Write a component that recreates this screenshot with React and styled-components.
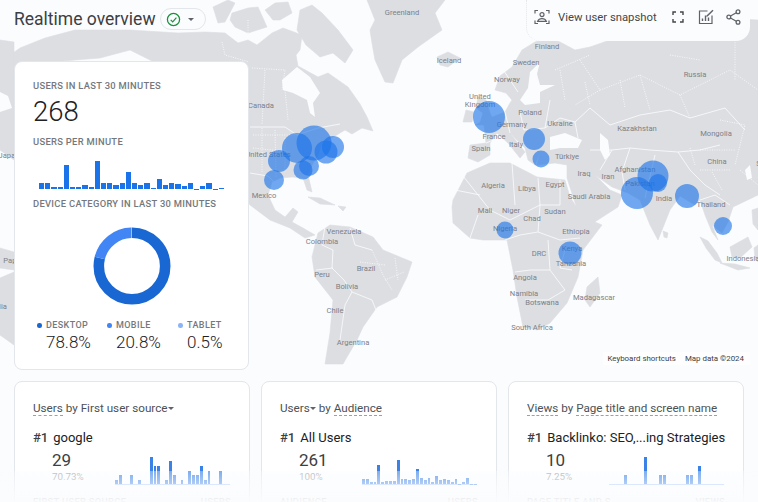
import React from 'react';
import styled, { createGlobalStyle } from 'styled-components';

const GlobalStyle = createGlobalStyle`
  html, body { margin: 0; padding: 0; background: #fbfcfe; }
  body { font-family: Roboto, "Liberation Sans", sans-serif; color: #202124; }
`;

const Page = styled.div`
  position: relative;
  width: 758px;
  height: 502px;
  overflow: hidden;
  background: #fbfcfe;
`;

const MapLayer = styled.svg`
  position: absolute;
  left: 0;
  top: 0;
`;

const Content = styled.div`
  position: relative;
  display: flex;
  flex-direction: column;
`;

const Header = styled.header`
  display: flex;
  justify-content: space-between;
  align-items: flex-start;
  height: 41px;
  margin-bottom: 20px;
  padding: 0 8px 0 14px;
`;

const TitleGroup = styled.div`
  display: flex;
  align-items: center;
  gap: 4px;
  height: 38px;
`;

const Title = styled.h1`
  margin: 0;
  font-size: 17.5px;
  font-weight: 400;
  color: #3c4043;
  white-space: nowrap;
`;

const StatusChip = styled.button`
  display: flex;
  align-items: center;
  gap: 7px;
  width: 46px;
  height: 22px;
  padding: 0 0 0 5px;
  border: 1px solid #e3e6ea;
  border-radius: 11px;
  background: #fbfcfe;
`;

const Caret = styled.span`
  flex: none;
  width: 0;
  height: 0;
  border-left: 3px solid transparent;
  border-right: 3px solid transparent;
  border-top: 3px solid ${props => props.$color || '#5f6368'};
`;

const Toolbar = styled.div`
  display: flex;
  align-items: center;
  width: 224px;
  height: 41px;
  box-sizing: border-box;
  padding: 0 7px 7px;
  background: #fbfcfe;
  border-radius: 0 0 14px 14px;
  border-left: 1px dotted #e4e6ea;
  color: #5f6368;
`;

const ToolLabel = styled.span`
  margin: 0 14px 0 8px;
  font-size: 11.3px;
  color: #444746;
  white-space: nowrap;
`;

const ToolIcon = styled.svg`
  flex: none;
  margin-right: ${props => props.$gap || 0}px;
`;

const MainRow = styled.div`
  display: flex;
  justify-content: space-between;
  align-items: flex-end;
  padding: 0 8px 0 14px;
`;

const SummaryCard = styled.section`
  box-sizing: border-box;
  width: 235px;
  height: 309px;
  padding: 18px 18px 0;
  background: #fff;
  border: 1px solid #e3e6ea;
  border-radius: 8px;
`;

const Overline = styled.div`
  font-size: 9.4px;
  font-weight: 500;
  letter-spacing: 0.3px;
  line-height: 12px;
  color: #74787d;
  white-space: nowrap;
`;

const BigNumber = styled.div`
  margin: 1px 0 5px;
  font-size: 27.5px;
  font-weight: 300;
  line-height: 38px;
  color: #202124;
`;

const MinuteChart = styled.div`
  display: flex;
  align-items: flex-end;
  gap: 1px;
  width: 185px;
  height: 30px;
  margin: 11px 0 9px 6px;
`;

const MinuteBar = styled.div`
  flex: 1;
  height: ${props => props.$h}px;
  background: #1a73e8;
`;

const DonutWrap = styled.div`
  display: flex;
  justify-content: center;
  margin: 17px 0 0;
`;

const Legend = styled.div`
  display: grid;
  grid-template-columns: 70px 71px 60px;
  margin: 14px 0 0 5px;
`;

const LegendItem = styled.div`
  display: flex;
  flex-direction: column;
  padding-left: 2px;
`;

const LegendLabel = styled.div`
  position: relative;
  padding-left: 6px;
  font-size: 9px;
  font-weight: 500;
  letter-spacing: 0.4px;
  line-height: 12px;
  color: #74787d;

  &::before {
    content: '';
    position: absolute;
    left: -3px;
    top: 4px;
    width: 4.5px;
    height: 4.5px;
    border-radius: 50%;
    background: ${props => props.$color};
  }
`;

const LegendValue = styled.div`
  padding-left: 6px;
  font-size: 17px;
  font-weight: 300;
  line-height: 23px;
  color: #202124;
`;

const Attribution = styled.div`
  display: flex;
  gap: 9px;
  margin-bottom: 5px;
  padding: 1px 6px 1px 4px;
  font-size: 7.9px;
  line-height: 11px;
  color: #3c4043;
  background: rgba(255, 255, 255, 0.7);
`;

const CardRow = styled.div`
  display: grid;
  grid-template-columns: 236px 236px 236px;
  gap: 11px;
  padding: 11px 0 0 14px;
`;

const ReportCard = styled.section`
  box-sizing: border-box;
  height: 140px;
  padding: 18px 18px 0;
  background: #fff;
  border: 1px solid #e3e6ea;
  border-radius: 8px;
`;

const CardTitle = styled.div`
  display: flex;
  align-items: center;
  font-size: 11.7px;
  line-height: 16px;
  color: #4d5156;
  white-space: nowrap;
`;

const Dimension = styled.span`
  border-bottom: 1px dashed #9aa0a6;
  line-height: 14px;
`;

const Spaced = styled.span`
  white-space: pre;
`;

const RankRow = styled.div`
  display: flex;
  gap: 5px;
  margin-top: 13px;
  font-size: 13px;
  font-weight: 500;
  line-height: 18px;
  color: #3c4043;
`;

const RankName = styled.span`
  font-weight: 400;
  color: #202124;
  white-space: nowrap;
`;

const MetricRow = styled.div`
  display: flex;
  justify-content: space-between;
  align-items: flex-start;
  height: 37px;
  margin-top: 1px;
`;

const MetricText = styled.div`
  padding-left: 19px;
`;

const MetricValue = styled.div`
  font-size: 17px;
  line-height: 24px;
  color: #3c4043;
`;

const MetricShare = styled.div`
  margin-top: -1px;
  font-size: 9.8px;
  line-height: 12px;
  color: #9aa0a6;
`;

const Spark = styled.div`
  align-self: flex-end;
  display: flex;
  align-items: flex-end;
  gap: 1px;
  width: 115px;
  height: 30px;
  margin-right: 1px;
  border-bottom: 1px solid #a8c7fa;
`;

const SparkBar = styled.div`
  flex: 1;
  height: ${props => props.$h}px;
  background: #3b82e6;
`;

const TableHead = styled.div`
  display: flex;
  justify-content: space-between;
  margin-top: 11px;
  font-size: 9.4px;
  font-weight: 500;
  letter-spacing: 0.3px;
  color: #74787d;
`;

const BottomFade = styled.div`
  position: absolute;
  left: 0;
  right: 0;
  bottom: 0;
  height: 31px;
  background: linear-gradient(rgba(249, 251, 253, 0.35), rgba(251, 252, 254, 0.97));
`;

const land = [
  // North America
  '0,62 20,48 45,38 75,30 100,30 130,30 178,33 205,32 225,33 238,43 248,40 257,45 272,33 283,28 302,35 300,50 296,55 298,66 318,77 328,73 348,87 360,104 367,117 373,131 362,128 352,134 345,130 335,136 322,143 318,155 312,165 308,175 312,192 307,190 303,178 292,177 280,178 272,182 268,195 275,210 285,217 293,208 298,212 292,222 303,228 315,235 305,238 290,228 270,220 250,205 235,185 235,150 215,110 170,70 130,50 100,58 50,62 0,75',
  // Arctic islands, Greenland and Iceland
  '213,7 228,0 235,3 225,22 218,23',
  '232,13 248,8 258,7 267,27 248,33 235,27 230,20',
  '265,10 275,3 288,2 292,13 280,20 273,20',
  '300,10 312,5 322,13 338,30 353,50 345,63 333,53 320,57 306,45 297,30',
  '367,0 445,0 435,13 442,30 418,47 402,60 393,83 385,82 375,60 372,43 370,30 375,20',
  '437,57 448,52 460,58 448,67 440,65',
  // Caribbean
  '308,197 320,198 335,205 320,204',
  '338,206 346,207 343,211',
  // South America
  '318,233 330,225 350,227 373,237 383,250 412,262 407,277 397,297 377,307 363,327 357,340 347,357 343,364 325,364 330,333 333,300 315,277 312,257',
  // Africa
  '453,200 467,173 490,163 510,163 537,177 565,180 570,197 583,217 602,225 583,250 578,277 567,303 550,323 537,330 523,327 517,297 513,270 507,240 483,240 470,238 453,223 452,207',
  '587,287 598,277 600,293 590,307 585,300',
  // Eurasia
  '506,93 495,90 500,76 512,67 522,50 535,42 548,38 560,42 575,50 590,47 610,40 640,30 680,22 720,18 758,20 758,195 733,207 728,222 722,233 712,225 718,240 712,232 705,215 700,200 695,205 680,196 670,210 658,240 650,225 640,200 628,193 612,187 595,175 598,178 610,190 622,195 618,207 590,225 580,218 567,178 567,165 555,163 537,165 540,152 535,165 528,160 525,148 510,133 525,152 520,158 508,143 497,133 490,143 490,155 478,162 468,158 470,145 486,143 484,125 475,125 490,118 505,112 510,103 512,100',
  // UK, Ireland and Sri Lanka
  '478,97 486,100 490,113 493,120 480,123 483,113 476,108',
  '466,110 474,112 472,122 463,122',
  '663,231 668,233 667,238 664,237',
  // Indonesia and the Philippines
  '700,237 708,241 717,253 722,263 715,260 706,248',
  '730,247 748,237 752,247 740,258 732,257',
  '720,263 735,264 750,268 738,270',
  '752,210 758,208 758,230 753,224',
  '754,248 758,245 758,262 755,258',
  // Wrapped Asia, Papua and Australia on the left edge
  '0,40 14,42 14,160 0,150',
  '0,248 14,252 14,270 0,268',
  '0,278 14,272 14,345 0,335',
];

const water = [
  '282,80 297,67 310,77 320,93 313,103 315,117 310,113 307,100 293,93 283,90',
  '520,100 528,88 530,72 540,62 537,74 540,85 555,85 540,92 540,103 525,105',
  '550,137 565,133 582,140 578,148 560,148 550,150',
  '600,133 608,140 610,155 605,160 600,150',
  '0,92 8,96 12,108 0,112',
  '745,170 750,165 752,178 747,180',
];

const borders = [
  'M250 127 L285 127 L297 135 L318 128 L340 124',
  'M250 173 L268 176 L275 183',
  'M325 226 L322 245 L333 250 L332 268 L344 280 L352 292 L345 305 L340 340',
  'M350 228 L355 245 L372 250 M333 268 L316 270 M352 292 L372 300 L376 310',
  'M463 176 L490 210 M490 210 L510 220 L540 205 L560 205 L560 180 M512 163 L515 205 M538 178 L540 205 M540 205 L538 232 M505 240 L520 235 L538 232 L560 240 L580 238',
  'M548 240 L550 270 L530 270 L515 272 M550 270 L565 290 L548 300 L525 300 M565 250 L560 268 L572 270',
  'M520 112 L524 130 L545 128 L560 118 L575 122 L590 108 L610 125 L640 115 L670 110 L690 118 L725 108 L745 130',
  'M575 122 L578 138 M550 100 L545 128 M505 112 L510 133 M486 143 L498 138 M500 65 L518 92',
  'M590 150 L612 150 L630 148 L650 150 L678 152 L700 150 L720 145 M678 152 L690 170 L705 185 L720 195 M612 150 L600 170 M630 148 L622 172 L625 190 M655 155 L648 185 L645 198',
  'M455 190 L480 195 M470 238 L478 215 M700 200 L715 195 L730 205',
];

const dotted = [
  'M222 42 L225 55 L249 62 M248 20 L248 38 M252 68 L285 70 L282 90 M265 70 L262 125 M285 90 L288 120',
  'M253 135 L296 135 M253 148 L290 152 M262 128 L262 172 M275 130 L276 178 M285 138 L285 172',
  'M372 250 L383 275 L392 290 M395 258 L398 280 M360 262 L385 265 M385 280 L404 272',
  'M555 70 L590 55 M580 60 L600 90 L640 75 L680 95 L730 70 L758 90 M600 90 L575 105 M640 75 L650 110 M680 95 L690 118',
  'M700 150 L735 150 M720 120 L745 125 L735 165 M700 170 L730 170 M690 148 L695 165 M712 172 L722 190 M740 170 L758 185',
  'M560 70 L565 100 M585 82 L590 105 M620 80 L625 108 M670 55 L700 60 M735 40 L735 80',
];

const labels = [
  ['Greenland', 402, 15], ['Iceland', 449, 63], ['Finland', 547, 49], ['Sweden', 526, 65], ['Norway', 507, 82],
  ['United', 480, 99], ['Kingdom', 480, 106.5], ['Germany', 512, 127], ['Poland', 530, 115], ['Ukraine', 560, 126],
  ['France', 494, 139], ['Italy', 516, 147], ['Spain', 481, 151], ['Türkiye', 567, 159], ['Iraq', 584, 176],
  ['Iran', 608, 179], ['Afghanistan', 635, 172], ['Pakistan', 640, 186], ['India', 664, 201], ['Thailand', 711, 207],
  ['Kazakhstan', 637, 131], ['Russia', 695, 77], ['Mongolia', 716, 136], ['China', 717, 164], ['South', 766, 166],
  ['Canada', 261, 108], ['United States', 268, 157], ['Mexico', 264, 198], ['Algeria', 493, 188], ['Libya', 527, 191],
  ['Egypt', 555, 187], ['Saudi Arabia', 589, 199], ['Mali', 485, 213], ['Niger', 511, 213], ['Sudan', 555, 214],
  ['Chad', 532, 221], ['Ethiopia', 576, 234], ['Nigeria', 505, 231], ['Kenya', 572, 251], ['Tanzania', 571, 266],
  ['DRC', 539, 256], ['Angola', 525, 280], ['Namibia', 524, 296], ['Botswana', 542, 305], ['South Africa', 532, 330],
  ['Madagascar', 594, 300], ['Venezuela', 344, 234], ['Colombia', 322, 244], ['Peru', 322, 277], ['Brazil', 366, 271],
  ['Bolivia', 347, 289], ['Chile', 335, 313], ['Argentina', 353, 345], ['Indonesia', 743, 261], ['Japan', 9, 158],
  ['Papua', 14, 263], ['Australia', -8, 309],
];

const bubbles = [
  [314, 143, 17.5], [297, 148, 15], [279, 161, 11], [274, 180, 10], [303, 170, 9.5], [309, 166, 10],
  [326, 152, 11.5], [333, 147, 11], [489, 117, 16], [534, 139, 11], [541, 159, 8.5], [637, 193, 16],
  [653, 176, 15.5], [658, 183, 9], [687, 196, 12], [723, 226, 9], [505, 230, 8.5], [570, 253, 11.5],
];

const WorldMap = () => (
  <MapLayer width="758" height="502" viewBox="0 0 758 502">
    {land.map((points, i) => (
      <polygon key={i} points={points} fill="#dcdee2" stroke="#dcdee2" strokeWidth="0.6" strokeLinejoin="round" />
    ))}
    {water.map((points, i) => (
      <polygon key={i} points={points} fill="#fbfcfe" />
    ))}
    {borders.map((d, i) => (
      <path key={i} d={d} fill="none" stroke="#fbfcfe" strokeWidth="0.8" />
    ))}
    {dotted.map((d, i) => (
      <path key={i} d={d} fill="none" stroke="#fbfcfe" strokeWidth="0.8" strokeDasharray="1 1.4" />
    ))}
    {labels.map(([name, x, y]) => (
      <text key={name + x} x={x} y={y} textAnchor="middle" fontFamily="Roboto" fontSize="7.6" fill="#7d8187">
        {name}
      </text>
    ))}
    {bubbles.map(([cx, cy, r], i) => (
      <circle key={i} cx={cx} cy={cy} r={r} fill="#1a73e8" fillOpacity="0.62" />
    ))}
  </MapLayer>
);

const CheckBadge = () => (
  <svg width="15" height="15" viewBox="0 0 15 15">
    <circle cx="7.5" cy="7.5" r="6.1" fill="none" stroke="#1e8e3e" strokeWidth="1.3" />
    <path d="M4.7 7.8 L6.7 9.8 L10.4 5.7" fill="none" stroke="#1e8e3e" strokeWidth="1.2" />
  </svg>
);

const SnapshotIcon = () => (
  <ToolIcon width="16" height="16" viewBox="0 0 16 16" fill="none" stroke="#5f6368" strokeWidth="1.2">
    <path d="M1 4.5V1.5H4M12 1.5H15V4.5M1 11.5V14.5H4M12 14.5H15V11.5" />
    <circle cx="8" cy="5.6" r="2" />
    <path d="M3.6 12.4C4.4 10.4 6 9.6 8 9.6S11.6 10.4 12.4 12.4Z" />
  </ToolIcon>
);

const FullscreenIcon = () => (
  <ToolIcon $gap={13} width="14" height="14" viewBox="0 0 14 14" fill="none" stroke="#444746" strokeWidth="1.4">
    <path d="M2 5V2H5M9 2H12V5M2 9V12H5M9 12H12V9" />
  </ToolIcon>
);

const InsightsIcon = () => (
  <ToolIcon $gap={12} width="16" height="16" viewBox="0 0 16 16" fill="none" stroke="#5f6368" strokeWidth="1.2">
    <path d="M9.5 2H1.5V14.5H14V6.5" />
    <path d="M4.5 12V9.5M7.5 12V6.5M10.5 12V8.5" strokeWidth="1.4" />
    <path d="M8.5 6.5L14.5 0.8L15.5 1.8L9.6 7.4L8.2 7.8Z" fill="#5f6368" stroke="none" />
  </ToolIcon>
);

const ShareIcon = () => (
  <ToolIcon width="15" height="16" viewBox="0 0 15 16" fill="none" stroke="#5f6368" strokeWidth="1.3">
    <circle cx="12" cy="2.8" r="1.9" />
    <circle cx="2.8" cy="8" r="1.9" />
    <circle cx="12" cy="13.2" r="1.9" />
    <path d="M4.5 7L10.3 3.8M4.5 9L10.3 12.2" />
  </ToolIcon>
);

const Donut = () => {
  const r = 33.2;
  const c = 2 * Math.PI * r;
  const parts = [
    { share: 0.788, color: '#1967d2' },
    { share: 0.207, color: '#4285f4' },
    { share: 0.005, color: '#8ab4f8' },
  ];
  let used = 0;
  return (
    <svg width="78" height="78" viewBox="0 0 78 78">
      <g transform="rotate(-90 39 39)">
        {parts.map(part => {
          const offset = -used * c;
          used += part.share;
          return (
            <circle
              key={part.color}
              cx="39"
              cy="39"
              r={r}
              fill="none"
              stroke={part.color}
              strokeWidth="10.6"
              strokeDasharray={`${part.share * c} ${c}`}
              strokeDashoffset={offset}
            />
          );
        })}
      </g>
    </svg>
  );
};

const minuteData = [6, 6, 2, 2, 24, 2.5, 2.5, 4, 2.5, 28, 6, 6.5, 4, 6, 17, 6.5, 4, 6.5, 1.5, 10, 4.5, 6.5, 5.5, 3.5, 6, 0.5, 3.5, 6.5, 0.5, 1];
const audienceData = [5, 5, 2, 2, 19, 2.5, 3, 3.5, 3, 24, 5, 5, 4, 5, 15, 6.5, 4.5, 6.5, 2, 8.5, 4.5, 5.5, 4.5, 2.5, 5, 0.5, 2.5, 6, 0.5, 0.5];

const fromPairs = pairs => {
  const row = new Array(30).fill(0);
  pairs.forEach(([i, h]) => { row[i] = h; });
  return row;
};

const sourceData = fromPairs([[0, 4], [1, 9], [4, 9], [6, 4], [9, 27], [10, 18], [11, 18], [13, 4], [14, 23], [15, 9], [17, 4], [19, 13], [20, 9], [21, 9], [22, 18], [23, 4], [24, 13], [27, 13]]);
const viewsData = fromPairs([[4, 9], [9, 27], [13, 9], [14, 9], [20, 9], [21, 9], [23, 18]]);

const Sparkline = ({ data }) => (
  <Spark>
    {data.map((h, i) => <SparkBar key={i} $h={h} />)}
  </Spark>
);

const Report = ({ title, name, value, share, data, column, metric }) => (
  <ReportCard>
    <CardTitle>{title}</CardTitle>
    <RankRow>#1<RankName>{name}</RankName></RankRow>
    <MetricRow>
      <MetricText>
        <MetricValue>{value}</MetricValue>
        <MetricShare>{share}</MetricShare>
      </MetricText>
      <Sparkline data={data} />
    </MetricRow>
    <TableHead><span>{column}</span><span>{metric}</span></TableHead>
  </ReportCard>
);

const App = () => (
  <Page>
    <GlobalStyle />
    <WorldMap />
    <Content>
      <Header>
        <TitleGroup>
          <Title>Realtime overview</Title>
          <StatusChip>
            <CheckBadge />
            <Caret />
          </StatusChip>
        </TitleGroup>
        <Toolbar>
          <SnapshotIcon />
          <ToolLabel>View user snapshot</ToolLabel>
          <FullscreenIcon />
          <InsightsIcon />
          <ShareIcon />
        </Toolbar>
      </Header>
      <MainRow>
        <SummaryCard>
          <Overline>USERS IN LAST 30 MINUTES</Overline>
          <BigNumber>268</BigNumber>
          <Overline>USERS PER MINUTE</Overline>
          <MinuteChart>
            {minuteData.map((h, i) => <MinuteBar key={i} $h={h} />)}
          </MinuteChart>
          <Overline>DEVICE CATEGORY IN LAST 30 MINUTES</Overline>
          <DonutWrap><Donut /></DonutWrap>
          <Legend>
            <LegendItem>
              <LegendLabel $color="#1967d2">DESKTOP</LegendLabel>
              <LegendValue>78.8%</LegendValue>
            </LegendItem>
            <LegendItem>
              <LegendLabel $color="#4285f4">MOBILE</LegendLabel>
              <LegendValue>20.8%</LegendValue>
            </LegendItem>
            <LegendItem>
              <LegendLabel $color="#8ab4f8">TABLET</LegendLabel>
              <LegendValue>0.5%</LegendValue>
            </LegendItem>
          </Legend>
        </SummaryCard>
        <Attribution>
          <span>Keyboard shortcuts</span>
          <span>Map data ©2024</span>
        </Attribution>
      </MainRow>
      <CardRow>
        <Report
          title={<><Dimension>Users</Dimension><Spaced> by First user source</Spaced><Caret /></>}
          name="google"
          value="29"
          share="70.73%"
          data={sourceData}
          column="FIRST USER SOURCE"
          metric="USERS"
        />
        <Report
          title={<>Users<Caret /><Spaced> by </Spaced><Dimension>Audience</Dimension></>}
          name="All Users"
          value="261"
          share="100%"
          data={audienceData}
          column="AUDIENCE"
          metric="USERS"
        />
        <Report
          title={<><Dimension>Views</Dimension><Spaced> by </Spaced><Dimension>Page title and screen name</Dimension></>}
          name="Backlinko: SEO,...ing Strategies"
          value="10"
          share="7.25%"
          data={viewsData}
          column="PAGE TITLE AND S..."
          metric="VIEWS"
        />
      </CardRow>
    </Content>
    <BottomFade />
  </Page>
);

export default App;
